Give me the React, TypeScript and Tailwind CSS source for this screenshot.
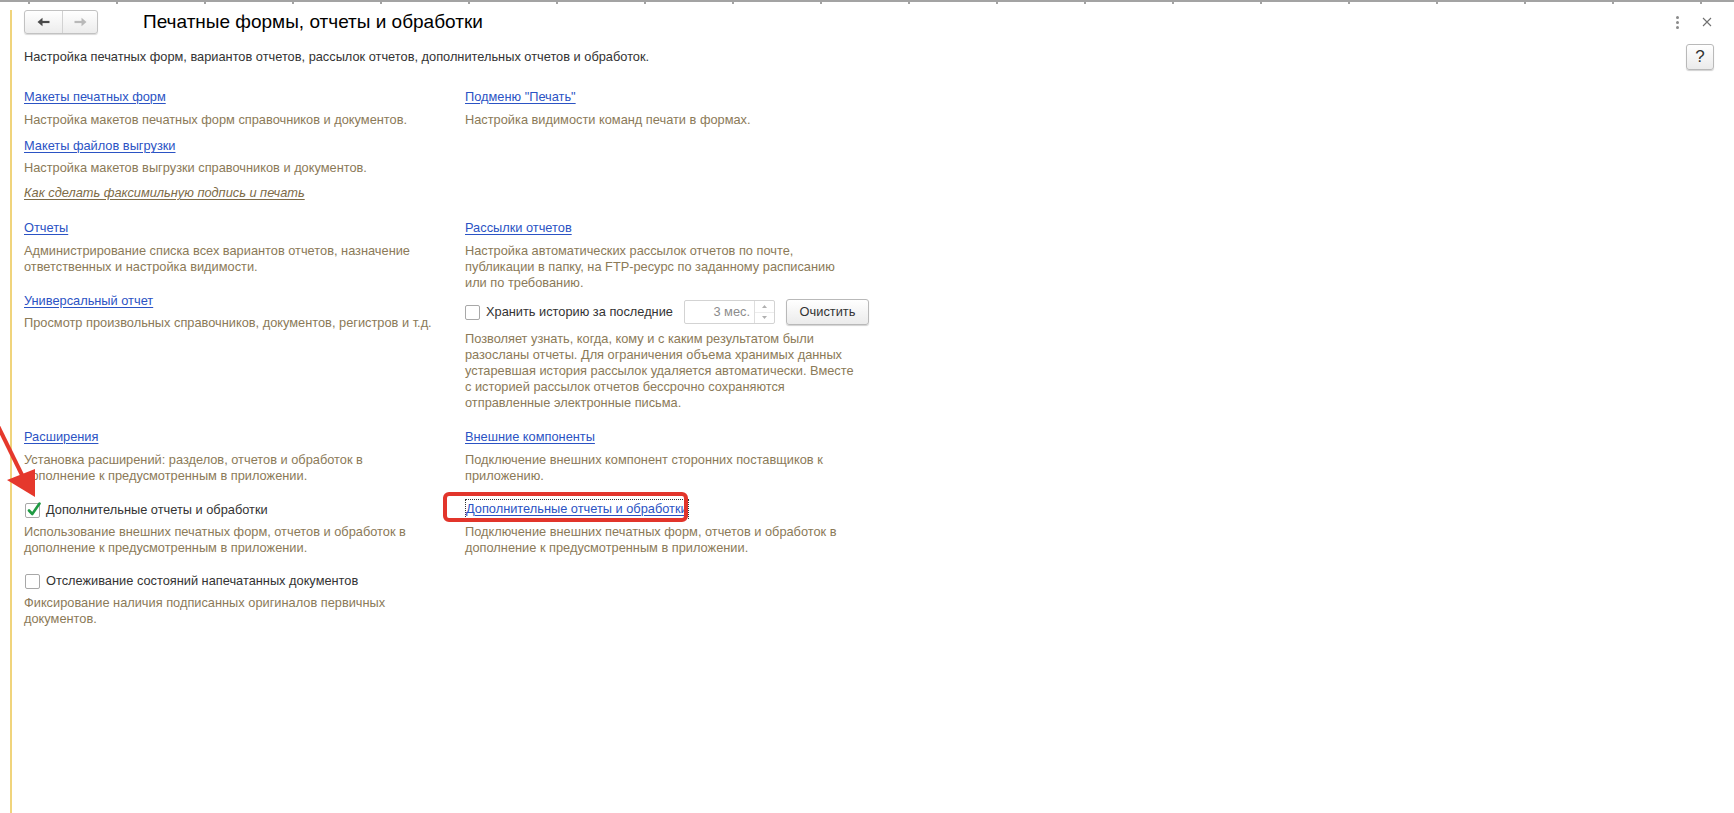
import React from "react";

const LINK = "text-[#2b53c4] underline decoration-1 underline-offset-[2px]";
const DESC = "text-[#8b7a58] leading-4";

function Arrow({ dir, color }: { dir: "l" | "r"; color: string }) {
  return (
    <svg width="13" height="10" viewBox="0 0 13 10">
      {dir === "l" ? (
        <>
          <path d="M4 5H12.5" stroke={color} strokeWidth="2.2" />
          <path d="M0.5 5L5.5 0.8V9.2Z" fill={color} />
        </>
      ) : (
        <>
          <path d="M0.5 5H9" stroke={color} strokeWidth="2.2" />
          <path d="M12.5 5L7.5 0.8V9.2Z" fill={color} />
        </>
      )}
    </svg>
  );
}

function Box({ checked }: { checked?: boolean }) {
  return (
    <span className="relative w-[15px] h-[15px] shrink-0 border border-[#a8a8a8] rounded-[2px] bg-white">
      {checked && (
        <svg className="absolute left-[1px] top-[-3px]" width="14" height="16" viewBox="0 0 14 16">
          <path d="M2 9.5L5.3 13L12.5 2.5" fill="none" stroke="#1f9a43" strokeWidth="2.6" strokeLinecap="round" strokeLinejoin="round" />
        </svg>
      )}
    </span>
  );
}

function Check({ checked, label, className = "" }: { checked?: boolean; label: string; className?: string }) {
  return (
    <div className={"flex items-center h-5 gap-[6px] pl-px " + className}>
      <Box checked={checked} />
      <span className="text-[#333333]">{label}</span>
    </div>
  );
}

function Btn({ children, className = "" }: { children: React.ReactNode; className?: string }) {
  return (
    <div
      className={
        "flex items-center justify-center rounded-[3px] border border-[#b9b9b9] bg-linear-to-b from-white to-[#ebebeb] shadow-[0_1px_1px_rgba(0,0,0,0.18)] text-[#333333] " +
        className
      }
    >
      {children}
    </div>
  );
}

export default function App() {
  const ticks = Array.from({ length: 20 }, (_, i) => i);
  return (
    <div className="relative w-[1734px] h-[813px] overflow-hidden bg-white text-[12.8px] leading-4 font-['Liberation_Sans',Arial,sans-serif]">
      {/* top tab line */}
      <div className="flex h-[4px] border-t-2 border-[#a3a3a3]">
        <div className="w-[28px] shrink-0" />
        {ticks.map((i) => (
          <div key={i} className="w-[88px] shrink-0 border-l-2 border-[#a3a3a3]" />
        ))}
      </div>

      <div className="ml-[10px] h-[809px] border-l-2 border-[#f0d47c] pl-[12px] pr-[20px]">
        {/* header */}
        <div className="flex items-center h-6 mt-[6px]">
          <div className="flex h-6 w-[74px] rounded-[3px] border border-[#c2c2c2] bg-linear-to-b from-white to-[#ececec] shadow-[0_1px_1px_rgba(0,0,0,0.15)]">
            <div className="w-[38px] flex items-center justify-center border-r border-[#d2d2d2]">
              <Arrow dir="l" color="#4a4a4a" />
            </div>
            <div className="flex-1 flex items-center justify-center">
              <Arrow dir="r" color="#b9b9b9" />
            </div>
          </div>
          <div className="ml-[45px] text-[19px] leading-6 text-black">Печатные формы, отчеты и обработки</div>
          <div className="ml-auto flex items-center">
            <div className="flex flex-col gap-[2px] items-center w-[6px]">
              <span className="w-[3px] h-[3px] bg-[#8a8a8a] rounded-full" />
              <span className="w-[3px] h-[3px] bg-[#8a8a8a] rounded-full" />
              <span className="w-[3px] h-[3px] bg-[#8a8a8a] rounded-full" />
            </div>
            <div className="ml-[20px] w-[14px] flex justify-center">
              <svg width="10" height="10" viewBox="0 0 10 10">
                <path d="M1 1L9 9M9 1L1 9" stroke="#707070" strokeWidth="1.1" />
              </svg>
            </div>
          </div>
        </div>

        {/* subtitle row */}
        <div className="flex items-center h-[26px] mt-[10px]">
          <div className="text-[#333333]">
            Настройка печатных форм, вариантов отчетов, рассылок отчетов, дополнительных отчетов и обработок.
          </div>
          <Btn className="ml-auto w-[28px] h-[26px] text-[17px]">?</Btn>
        </div>

        {/* section 1 */}
        <div className="grid grid-cols-[441px_440px] mt-[19px]">
          <div className="flex flex-col items-start">
            <a className={LINK}>Макеты печатных форм</a>
            <div className={DESC + " mt-[7px]"}>Настройка макетов печатных форм справочников и документов.</div>
            <a className={LINK + " mt-[10px]"}>Макеты файлов выгрузки</a>
            <div className={DESC + " mt-[6px]"}>Настройка макетов выгрузки справочников и документов.</div>
            <a className="mt-[9px] italic text-[#7d6b47] underline underline-offset-[2px]">Как сделать факсимильную подпись и печать</a>
          </div>
          <div className="flex flex-col items-start">
            <a className={LINK}>Подменю "Печать"</a>
            <div className={DESC + " mt-[7px]"}>Настройка видимости команд печати в формах.</div>
          </div>
        </div>

        {/* section 2 */}
        <div className="grid grid-cols-[441px_440px] mt-[19px]">
          <div className="flex flex-col items-start">
            <a className={LINK}>Отчеты</a>
            <div className={DESC + " mt-[7px]"}>
              Администрирование списка всех вариантов отчетов, назначение
              <br />
              ответственных и настройка видимости.
            </div>
            <a className={LINK + " mt-[18px]"}>Универсальный отчет</a>
            <div className={DESC + " mt-[6px]"}>Просмотр произвольных справочников, документов, регистров и т.д.</div>
          </div>
          <div className="flex flex-col items-start">
            <a className={LINK}>Рассылки отчетов</a>
            <div className={DESC + " mt-[7px]"}>
              Настройка автоматических рассылок отчетов по почте,
              <br />
              публикации в папку, на FTP-ресурс по заданному расписанию
              <br />
              или по требованию.
            </div>
            <div className="flex items-center h-[26px] mt-[8px]">
              <Box />
              <span className="ml-[6px] text-[#333333]">Хранить историю за последние</span>
              <div className="ml-[11px] flex h-6 w-[91px] border border-[#d3d3d3] rounded-[2px] bg-white">
                <div className="flex-1 flex items-center justify-end pr-[4px] text-[#8c8c8c]">3 мес.</div>
                <div className="w-[20px] border-l border-[#dedede] flex flex-col">
                  <div className="flex-1 flex items-center justify-center">
                    <svg width="5" height="3" viewBox="0 0 5 3"><path d="M2.5 0L5 3H0Z" fill="#b0b0b0" /></svg>
                  </div>
                  <div className="flex-1 flex items-center justify-center border-t border-[#ececec]">
                    <svg width="5" height="3" viewBox="0 0 5 3"><path d="M2.5 3L5 0H0Z" fill="#b0b0b0" /></svg>
                  </div>
                </div>
              </div>
              <Btn className="ml-[11px] w-[83px] h-[26px]">Очистить</Btn>
            </div>
            <div className={DESC + " mt-[6px]"}>
              Позволяет узнать, когда, кому и с каким результатом были
              <br />
              разосланы отчеты. Для ограничения объема хранимых данных
              <br />
              устаревшая история рассылок удаляется автоматически. Вместе
              <br />
              с историей рассылок отчетов бессрочно сохраняются
              <br />
              отправленные электронные письма.
            </div>
          </div>
        </div>

        {/* section 3 */}
        <div className="grid grid-cols-[441px_440px] mt-[18px]">
          <div className="flex flex-col items-start">
            <a className={LINK}>Расширения</a>
            <div className={DESC + " mt-[7px]"}>
              Установка расширений: разделов, отчетов и обработок в
              <br />
              дополнение к предусмотренным в приложении.
            </div>
            <Check checked label="Дополнительные отчеты и обработки" className="mt-[16px]" />
            <div className={DESC + " mt-[4px]"}>
              Использование внешних печатных форм, отчетов и обработок в
              <br />
              дополнение к предусмотренным в приложении.
            </div>
            <Check label="Отслеживание состояний напечатанных документов" className="mt-[15px]" />
            <div className={DESC + " mt-[4px]"}>
              Фиксирование наличия подписанных оригиналов первичных
              <br />
              документов.
            </div>
          </div>
          <div className="flex flex-col items-start">
            <a className={LINK}>Внешние компоненты</a>
            <div className={DESC + " mt-[7px]"}>
              Подключение внешних компонент сторонних поставщиков к
              <br />
              приложению.
            </div>
            <div className="relative mt-[15px]">
              <a className={LINK + " block leading-[18px] border border-dotted border-[#333333]"}>
                Дополнительные отчеты и обработки
              </a>
              <div className="absolute left-[-22px] top-[-7px] w-[245px] h-[30px] rounded-[6px] border-[4px] border-[#e2352b]" />
            </div>
            <div className={DESC + " mt-[5px]"}>
              Подключение внешних печатных форм, отчетов и обработок в
              <br />
              дополнение к предусмотренным в приложении.
            </div>
          </div>
        </div>
      </div>

      {/* red arrow annotation */}
      <svg className="absolute left-0 top-[418px]" width="50" height="90" viewBox="0 0 50 90">
        <path d="M-3 6L23 59" stroke="#e5382c" strokeWidth="4" />
        <path d="M35 79L7 62L35 51Z" fill="#e5382c" />
      </svg>
    </div>
  );
}
